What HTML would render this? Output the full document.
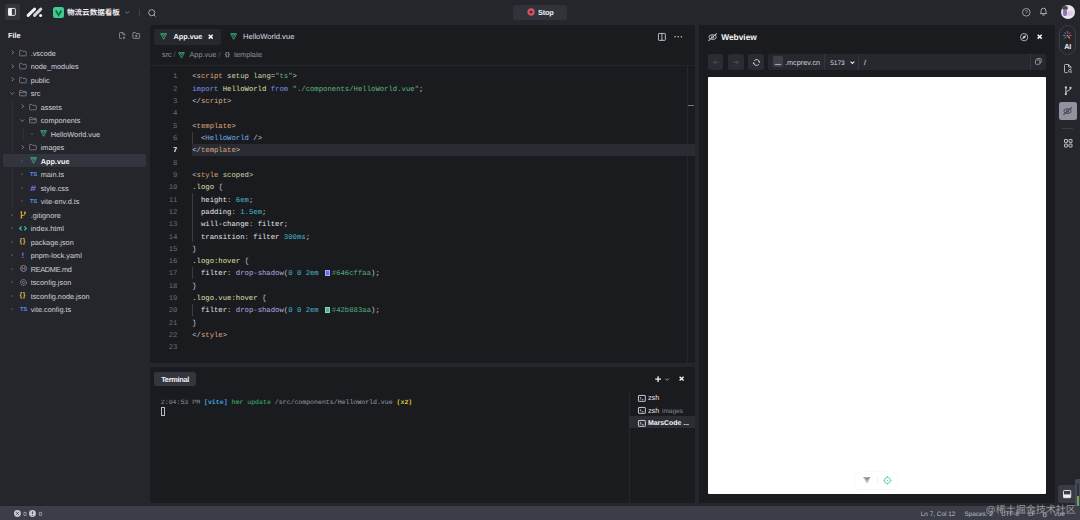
<!DOCTYPE html>
<html lang="zh"><head><meta charset="utf-8"><title>MarsCode IDE</title><style>
*{box-sizing:border-box;margin:0;padding:0}
html,body{width:1080px;height:520px;overflow:hidden;background:#25262b}
body{position:relative;text-rendering:geometricPrecision;font-family:"Liberation Sans","Noto Sans CJK SC",sans-serif;font-size:7.3px;color:#d3d5dd;line-height:1}
.abs{position:absolute}
.panel{position:absolute;background:#1a1b1f;border-radius:2px}
.t{position:absolute;white-space:nowrap;line-height:10px;height:10px}
svg{position:absolute;overflow:visible}
.row{position:absolute;left:0;width:150px;height:13.5px}
.mono{font-family:"Liberation Mono",monospace}
.code{position:absolute;left:192.2px;white-space:pre;font-family:"Liberation Mono",monospace;font-size:7.28px;line-height:12.32px;height:12.32px;color:#d6d8e0}
.ln{position:absolute;left:150px;width:27.4px;text-align:right;font-family:"Liberation Mono",monospace;font-size:7.28px;line-height:12.32px;height:12.32px;color:#6b6d77}
.tg{color:#dba67a}.at{color:#c9d7a2}.st{color:#5fb87c}.kw{color:#7590f2}.cl{color:#dfe0a8}.bl{color:#6cb2f5}
.nu{color:#45b9c9}.fn{color:#b3aae2}.pn{color:#c9ccd6}.pr{color:#e4e5ea}.hx{color:#52b07e}
.sw{display:inline-block;position:relative;top:-0.5px;width:5.8px;height:5.8px;border:0.7px solid rgba(228,228,236,0.5);vertical-align:middle;margin:0 1.45px}
</style></head><body>
<div class="abs" style="left:4.7px;top:4.4px;width:15.4px;height:15.3px;border-radius:2.5px;background:#34363e"></div>
<svg style="left:8.3px;top:8.4px" width="7.8" height="7.8" viewBox="0 0 7.8 7.8"><rect x="0.45" y="0.45" width="6.9" height="6.9" rx="0.8" fill="none" stroke="#f2f2f5" stroke-width="0.9"/><rect x="0.3" y="0.3" width="3.6" height="7.2" rx="0.6" fill="#f2f2f5"/></svg>
<svg style="left:26px;top:7px" width="18" height="11" viewBox="26 7 18 11"><path d="M28.1 15.4 L34.6 9.1" stroke="#f1f1f3" stroke-width="2.9" stroke-linecap="round"/><path d="M34.5 15.4 L40.8 9.1" stroke="#d4d4d8" stroke-width="2.9" stroke-linecap="round"/><circle cx="40.6" cy="15.4" r="1.5" fill="#f4f4f6"/></svg>
<div class="abs" style="left:53px;top:6.8px;width:11.1px;height:11.3px;border-radius:2.2px;background:#3fcb90"></div>
<svg style="left:53px;top:6.8px" width="11.1" height="11.3" viewBox="0 0 11.1 11.3"><path d="M2.9 3.5 L5.6 8.2 L8.3 3.5" fill="none" stroke="#0c6e41" stroke-width="1.7" stroke-linejoin="miter"/></svg>
<div class="t" style="left:67px;top:8.2px;font-size:7.55px;font-weight:bold;color:#f0f0f3">物流云数据看板</div>
<svg style="left:124.7px;top:11.3px" width="4.6" height="3" viewBox="0 0 4.6 3"><path d="M0.4 0.5 L2.3 2.4 L4.2 0.5" fill="none" stroke="#8d8f9a" stroke-width="0.8"/></svg>
<div class="abs" style="left:138.6px;top:8.6px;width:0.6px;height:7.4px;background:#3e4049"></div>
<svg style="left:147.6px;top:8.6px" width="8" height="8" viewBox="0 0 8 8"><circle cx="3.7" cy="3.7" r="3.05" fill="none" stroke="#b9bbc6" stroke-width="0.85"/><path d="M6 6 L7.3 7.3" stroke="#b9bbc6" stroke-width="0.85" stroke-linecap="round"/></svg>
<div class="abs" style="left:513.3px;top:4.6px;width:53.7px;height:15.4px;border-radius:2.5px;background:#31333b"></div>
<svg style="left:527px;top:8.3px" width="8" height="8" viewBox="0 0 8 8"><circle cx="4" cy="4" r="2.6" fill="none" stroke="#e4515c" stroke-width="2.1"/></svg>
<div class="t" style="left:538px;top:7.6px;font-weight:bold;font-size:7.3px;letter-spacing:-0.2px;color:#f4f4f6">Stop</div>
<svg style="left:1021.8px;top:8px" width="8.6" height="8.6" viewBox="0 0 8.6 8.6"><circle cx="4.3" cy="4.3" r="3.8" fill="none" stroke="#b4b6c1" stroke-width="0.8"/><text x="4.3" y="6.2" font-size="5.4" text-anchor="middle" fill="#b4b6c1" font-family="Liberation Sans, sans-serif">?</text></svg>
<svg style="left:1039.4px;top:7.4px" width="9" height="9" viewBox="0 0 9 9"><path d="M1.2 6.6 H7.8 C6.9 5.8 6.9 5 6.9 3.6 A2.4 2.4 0 0 0 2.1 3.6 C2.1 5 2.1 5.8 1.2 6.6 Z" fill="none" stroke="#b4b6c1" stroke-width="0.95" stroke-linejoin="round"/><path d="M3.7 8 H5.3" stroke="#b4b6c1" stroke-width="0.95" stroke-linecap="round"/></svg>
<div class="abs" style="left:1060.6px;top:5.1px;width:14.2px;height:14.2px;border-radius:50%;background:#ebe3f2;overflow:hidden"><div class="abs" style="left:1.6px;top:0.6px;width:5.6px;height:4.2px;border-radius:50%;background:#4d4a2c"></div><div class="abs" style="left:2.4px;top:4.4px;width:3.6px;height:6.4px;border-radius:40%;background:#7563a8;opacity:.85"></div><div class="abs" style="left:6.6px;top:6.4px;width:6px;height:4.6px;border-radius:45%;background:#e3b9e0;opacity:.7"></div></div>
<div class="t" style="left:8px;top:31.3px;font-weight:bold;color:#f0f0f3;font-size:7.4px">File</div>
<svg style="left:119.1px;top:31.7px" width="7.1" height="7.5" viewBox="0 0 8 8.5"><path d="M3.2 7.3 H1.4 A0.8 0.8 0 0 1 0.6 6.5 V1.4 A0.8 0.8 0 0 1 1.4 0.6 H4.4 L6.4 2.6 V4.2 M4.3 0.7 V2.7 H6.3" fill="none" stroke="#9597a3" stroke-width="0.95" stroke-linejoin="round"/><path d="M5.6 5.2 V8 M4.2 6.6 H7" stroke="#9597a3" stroke-width="0.95"/></svg>
<svg style="left:131.8px;top:32.1px" width="8.5" height="6.9" viewBox="0 0 8.6 7.6"><path d="M0.6 1.3 A0.7 0.7 0 0 1 1.3 0.6 H3.3 L4.2 1.7 H7.3 A0.7 0.7 0 0 1 8 2.4 V6.3 A0.7 0.7 0 0 1 7.3 7 H1.3 A0.7 0.7 0 0 1 0.6 6.3 Z" fill="none" stroke="#9597a3" stroke-width="0.95" stroke-linejoin="round"/><path d="M4.3 3 V5.8 M2.9 4.4 H5.7" stroke="#9597a3" stroke-width="0.95"/></svg>
<div class="abs" style="left:12.3px;top:100.5px;width:0.6px;height:107px;background:#2e3037"></div>
<div class="abs" style="left:22.5px;top:127.5px;width:0.6px;height:12.5px;background:#2e3037"></div>
<svg style="left:10.8px;top:50.2px" width="3" height="4.6" viewBox="0 0 3 4.6"><path d="M0.9 0.5 L2.6 2.3 L0.9 4.1" fill="none" stroke="#8d8f9a" stroke-width="0.9"/></svg>
<svg style="left:19px;top:49.7px" width="7.9" height="6.3" viewBox="0 0 8.4 7"><path d="M0.5 1.2 A0.7 0.7 0 0 1 1.2 0.5 H3 L3.9 1.5 H7.2 A0.7 0.7 0 0 1 7.9 2.2 V5.8 A0.7 0.7 0 0 1 7.2 6.5 H1.2 A0.7 0.7 0 0 1 0.5 5.8 Z" fill="none" stroke="#858792" stroke-width="0.85" stroke-linejoin="round"/></svg>
<div class="t" style="left:30.7px;top:48.65px;color:#d0d2da">.vscode</div>
<svg style="left:10.8px;top:63.7px" width="3" height="4.6" viewBox="0 0 3 4.6"><path d="M0.9 0.5 L2.6 2.3 L0.9 4.1" fill="none" stroke="#8d8f9a" stroke-width="0.9"/></svg>
<svg style="left:19px;top:63.2px" width="7.9" height="6.3" viewBox="0 0 8.4 7"><path d="M0.5 1.2 A0.7 0.7 0 0 1 1.2 0.5 H3 L3.9 1.5 H7.2 A0.7 0.7 0 0 1 7.9 2.2 V5.8 A0.7 0.7 0 0 1 7.2 6.5 H1.2 A0.7 0.7 0 0 1 0.5 5.8 Z" fill="none" stroke="#858792" stroke-width="0.85" stroke-linejoin="round"/></svg>
<div class="t" style="left:30.7px;top:62.15px;color:#d0d2da">node_modules</div>
<svg style="left:10.8px;top:77.2px" width="3" height="4.6" viewBox="0 0 3 4.6"><path d="M0.9 0.5 L2.6 2.3 L0.9 4.1" fill="none" stroke="#8d8f9a" stroke-width="0.9"/></svg>
<svg style="left:19px;top:76.7px" width="7.9" height="6.3" viewBox="0 0 8.4 7"><path d="M0.5 1.2 A0.7 0.7 0 0 1 1.2 0.5 H3 L3.9 1.5 H7.2 A0.7 0.7 0 0 1 7.9 2.2 V5.8 A0.7 0.7 0 0 1 7.2 6.5 H1.2 A0.7 0.7 0 0 1 0.5 5.8 Z" fill="none" stroke="#858792" stroke-width="0.85" stroke-linejoin="round"/></svg>
<div class="t" style="left:30.7px;top:75.65px;color:#d0d2da">public</div>
<svg style="left:10.2px;top:91.8px" width="4.6" height="3" viewBox="0 0 4.6 3"><path d="M0.4 0.5 L2.3 2.4 L4.2 0.5" fill="none" stroke="#8d8f9a" stroke-width="0.8"/></svg>
<svg style="left:19px;top:90.2px" width="7.9" height="6.3" viewBox="0 0 8.4 7"><path d="M0.5 1.2 A0.7 0.7 0 0 1 1.2 0.5 H3 L3.9 1.5 H7.2 A0.7 0.7 0 0 1 7.9 2.2 V5.8 A0.7 0.7 0 0 1 7.2 6.5 H1.2 A0.7 0.7 0 0 1 0.5 5.8 Z M0.6 3 H7.8" fill="none" stroke="#8f919c" stroke-width="0.8" stroke-linejoin="round"/></svg>
<div class="t" style="left:30.7px;top:89.15px;color:#d0d2da">src</div>
<svg style="left:20.8px;top:104.2px" width="3" height="4.6" viewBox="0 0 3 4.6"><path d="M0.9 0.5 L2.6 2.3 L0.9 4.1" fill="none" stroke="#8d8f9a" stroke-width="0.9"/></svg>
<svg style="left:29px;top:103.7px" width="7.9" height="6.3" viewBox="0 0 8.4 7"><path d="M0.5 1.2 A0.7 0.7 0 0 1 1.2 0.5 H3 L3.9 1.5 H7.2 A0.7 0.7 0 0 1 7.9 2.2 V5.8 A0.7 0.7 0 0 1 7.2 6.5 H1.2 A0.7 0.7 0 0 1 0.5 5.8 Z" fill="none" stroke="#858792" stroke-width="0.85" stroke-linejoin="round"/></svg>
<div class="t" style="left:40.7px;top:102.65px;color:#d0d2da">assets</div>
<svg style="left:20.2px;top:118.8px" width="4.6" height="3" viewBox="0 0 4.6 3"><path d="M0.4 0.5 L2.3 2.4 L4.2 0.5" fill="none" stroke="#8d8f9a" stroke-width="0.8"/></svg>
<svg style="left:29px;top:117.2px" width="7.9" height="6.3" viewBox="0 0 8.4 7"><path d="M0.5 1.2 A0.7 0.7 0 0 1 1.2 0.5 H3 L3.9 1.5 H7.2 A0.7 0.7 0 0 1 7.9 2.2 V5.8 A0.7 0.7 0 0 1 7.2 6.5 H1.2 A0.7 0.7 0 0 1 0.5 5.8 Z M0.6 3 H7.8" fill="none" stroke="#8f919c" stroke-width="0.8" stroke-linejoin="round"/></svg>
<div class="t" style="left:40.7px;top:116.15px;color:#d0d2da">components</div>
<div class="abs" style="left:31.2px;top:132.90px;width:1.8px;height:1.8px;border-radius:0.4px;background:#45474f"></div>
<svg style="left:39.6px;top:130.3px" width="7.3" height="6.86" viewBox="0 0 10 9.4"><path d="M0.9 0.9 H9.1 L5 8.6 Z" fill="none" stroke="#3fbd8c" stroke-width="1.05" stroke-linejoin="round"/><path d="M3.1 1 L5 4.4 L6.9 1" fill="none" stroke="#3fbd8c" stroke-width="1.05" stroke-linejoin="round" stroke-linecap="round"/></svg>
<div class="t" style="left:50.7px;top:129.65px;color:#d0d2da">HelloWorld.vue</div>
<svg style="left:20.8px;top:144.7px" width="3" height="4.6" viewBox="0 0 3 4.6"><path d="M0.9 0.5 L2.6 2.3 L0.9 4.1" fill="none" stroke="#8d8f9a" stroke-width="0.9"/></svg>
<svg style="left:29px;top:144.2px" width="7.9" height="6.3" viewBox="0 0 8.4 7"><path d="M0.5 1.2 A0.7 0.7 0 0 1 1.2 0.5 H3 L3.9 1.5 H7.2 A0.7 0.7 0 0 1 7.9 2.2 V5.8 A0.7 0.7 0 0 1 7.2 6.5 H1.2 A0.7 0.7 0 0 1 0.5 5.8 Z" fill="none" stroke="#858792" stroke-width="0.85" stroke-linejoin="round"/></svg>
<div class="t" style="left:40.7px;top:143.15px;color:#d0d2da">images</div>
<div class="abs" style="left:3.4px;top:154.45px;width:143px;height:12.8px;border-radius:2px;background:#33353e"></div>
<div class="abs" style="left:21.2px;top:159.90px;width:1.8px;height:1.8px;border-radius:0.4px;background:#45474f"></div>
<svg style="left:29.6px;top:157.3px" width="7.3" height="6.86" viewBox="0 0 10 9.4"><path d="M0.9 0.9 H9.1 L5 8.6 Z" fill="none" stroke="#3fbd8c" stroke-width="1.05" stroke-linejoin="round"/><path d="M3.1 1 L5 4.4 L6.9 1" fill="none" stroke="#3fbd8c" stroke-width="1.05" stroke-linejoin="round" stroke-linecap="round"/></svg>
<div class="t" style="left:40.7px;top:156.65px;font-weight:bold;color:#f4f4f6">App.vue</div>
<div class="abs" style="left:21.2px;top:173.40px;width:1.8px;height:1.8px;border-radius:0.4px;background:#45474f"></div>
<div class="t" style="left:30.0px;top:170.35000000000002px;font-size:5.7px;font-weight:bold;color:#5b8ff0;letter-spacing:0px">TS</div>
<div class="t" style="left:40.7px;top:170.15px;color:#d0d2da">main.ts</div>
<div class="abs" style="left:21.2px;top:186.90px;width:1.8px;height:1.8px;border-radius:0.4px;background:#45474f"></div>
<div class="t" style="left:30.5px;top:184.10px;font-size:8px;font-weight:bold;color:#8a6df2;transform:scaleX(1.3);transform-origin:50% 50%">#</div>
<div class="t" style="left:40.7px;top:183.65px;color:#d0d2da">style.css</div>
<div class="abs" style="left:21.2px;top:200.40px;width:1.8px;height:1.8px;border-radius:0.4px;background:#45474f"></div>
<div class="t" style="left:30.0px;top:197.35000000000002px;font-size:5.7px;font-weight:bold;color:#5b8ff0;letter-spacing:0px">TS</div>
<div class="t" style="left:40.7px;top:197.15px;color:#d0d2da">vite-env.d.ts</div>
<div class="abs" style="left:11.2px;top:213.90px;width:1.8px;height:1.8px;border-radius:0.4px;background:#45474f"></div>
<svg style="left:20px;top:211.00px" width="6.5" height="7.6" viewBox="0 0 6.5 7.6"><path d="M1.4 1 V6.8 M1.4 4.6 C4.6 4.6 5 3.6 5 1.6" fill="none" stroke="#e9a93b" stroke-width="1.1"/><circle cx="1.4" cy="1.1" r="0.9" fill="#e9a93b"/><circle cx="5" cy="1.4" r="0.9" fill="#e9a93b"/><circle cx="1.4" cy="6.6" r="0.9" fill="#e9a93b"/></svg>
<div class="t" style="left:30.7px;top:210.65px;color:#d0d2da">.gitignore</div>
<div class="abs" style="left:11.2px;top:227.40px;width:1.8px;height:1.8px;border-radius:0.4px;background:#45474f"></div>
<svg style="left:19px;top:225.90px" width="8" height="4.8" viewBox="0 0 8 4.8"><path d="M2.6 0.5 L0.7 2.4 L2.6 4.3 M5.4 0.5 L7.3 2.4 L5.4 4.3" fill="none" stroke="#3fb99f" stroke-width="1.25"/></svg>
<div class="t" style="left:30.7px;top:224.15px;color:#d0d2da">index.html</div>
<div class="abs" style="left:11.2px;top:240.90px;width:1.8px;height:1.8px;border-radius:0.4px;background:#45474f"></div>
<div class="t" style="left:19.6px;top:236.9px;font-size:6.8px;font-weight:bold;color:#d9bb4c;letter-spacing:0.6px">{}</div>
<div class="t" style="left:30.7px;top:237.65px;color:#d0d2da">package.json</div>
<div class="abs" style="left:11.2px;top:254.40px;width:1.8px;height:1.8px;border-radius:0.4px;background:#45474f"></div>
<div class="t" style="left:21.6px;top:250.5px;font-size:8px;font-weight:bold;color:#8a6df2;letter-spacing:0px">!</div>
<div class="t" style="left:30.7px;top:251.15px;color:#d0d2da">pnpm-lock.yaml</div>
<div class="abs" style="left:11.2px;top:267.90px;width:1.8px;height:1.8px;border-radius:0.4px;background:#45474f"></div>
<svg style="left:19.5px;top:265.40px" width="7" height="7" viewBox="0 0 7 7"><circle cx="3.5" cy="3.5" r="3" fill="none" stroke="#9496a1" stroke-width="0.8"/><path d="M2.2 4.9 V2.4 L3.5 3.8 L4.8 2.4 V4.9" fill="none" stroke="#9496a1" stroke-width="0.7"/></svg>
<div class="t" style="left:30.7px;top:264.65px;color:#d0d2da;letter-spacing:-0.28px">README.md</div>
<div class="abs" style="left:11.2px;top:281.40px;width:1.8px;height:1.8px;border-radius:0.4px;background:#45474f"></div>
<svg style="left:19.5px;top:278.90px" width="7" height="7" viewBox="0 0 7 7"><circle cx="3.5" cy="3.5" r="2.9" fill="none" stroke="#9496a1" stroke-width="1" stroke-dasharray="1.4 0.5"/><circle cx="3.5" cy="3.5" r="1.1" fill="none" stroke="#9496a1" stroke-width="0.7"/></svg>
<div class="t" style="left:30.7px;top:278.15px;color:#d0d2da">tsconfig.json</div>
<div class="abs" style="left:11.2px;top:294.90px;width:1.8px;height:1.8px;border-radius:0.4px;background:#45474f"></div>
<div class="t" style="left:19.6px;top:290.90000000000003px;font-size:6.8px;font-weight:bold;color:#d9bb4c;letter-spacing:0.6px">{}</div>
<div class="t" style="left:30.7px;top:291.65px;color:#d0d2da">tsconfig.node.json</div>
<div class="abs" style="left:11.2px;top:308.40px;width:1.8px;height:1.8px;border-radius:0.4px;background:#45474f"></div>
<div class="t" style="left:20.0px;top:305.35px;font-size:5.7px;font-weight:bold;color:#5b8ff0;letter-spacing:0px">TS</div>
<div class="t" style="left:30.7px;top:305.15px;color:#d0d2da">vite.config.ts</div>
<div class="panel" style="left:150.1px;top:25px;width:545.2px;height:338px"></div>
<div class="abs" style="left:154.3px;top:29.1px;width:67.2px;height:15.6px;border-radius:2.5px;background:#27282e"></div>
<svg style="left:159.8px;top:32.9px" width="7.3" height="6.86" viewBox="0 0 10 9.4"><path d="M0.9 0.9 H9.1 L5 8.6 Z" fill="none" stroke="#3fbd8c" stroke-width="1.05" stroke-linejoin="round"/><path d="M3.1 1 L5 4.4 L6.9 1" fill="none" stroke="#3fbd8c" stroke-width="1.05" stroke-linejoin="round" stroke-linecap="round"/></svg>
<div class="t" style="left:173.5px;top:31.9px;font-weight:bold;color:#f4f4f6">App.vue</div>
<svg style="left:207.9px;top:33.8px" width="5.4" height="5.4" viewBox="0 0 5.4 5.4"><path d="M0.7 0.8 L4.7 4.6 M4.7 0.8 L0.7 4.6" stroke="#f4f4f6" stroke-width="1.5"/></svg>
<svg style="left:229.7px;top:32.9px" width="7.3" height="6.86" viewBox="0 0 10 9.4"><path d="M0.9 0.9 H9.1 L5 8.6 Z" fill="none" stroke="#3fbd8c" stroke-width="1.05" stroke-linejoin="round"/><path d="M3.1 1 L5 4.4 L6.9 1" fill="none" stroke="#3fbd8c" stroke-width="1.05" stroke-linejoin="round" stroke-linecap="round"/></svg>
<div class="t" style="left:243px;top:31.9px;color:#d9dbe2;font-size:7.6px">HelloWorld.vue</div>
<svg style="left:658.2px;top:32.6px" width="7.8" height="7.8" viewBox="0 0 7.8 7.8"><rect x="0.45" y="0.45" width="6.9" height="6.9" rx="0.6" fill="none" stroke="#c9cbd4" stroke-width="0.9"/><path d="M3.9 0.5 V7.3" stroke="#c9cbd4" stroke-width="0.9"/></svg>
<svg style="left:673.8px;top:35.7px" width="8.4" height="1.6" viewBox="0 0 8.4 1.6"><circle cx="1" cy="0.8" r="0.75" fill="#c9cbd4"/><circle cx="4.2" cy="0.8" r="0.75" fill="#c9cbd4"/><circle cx="7.4" cy="0.8" r="0.75" fill="#c9cbd4"/></svg>
<div class="t" style="left:162px;top:50.4px;color:#8f919c">src</div>
<div class="t" style="left:173.4px;top:50.4px;color:#5d5f69">/</div>
<svg style="left:178.2px;top:51.5px" width="7.0" height="6.58" viewBox="0 0 10 9.4"><path d="M0.9 0.9 H9.1 L5 8.6 Z" fill="none" stroke="#3fbd8c" stroke-width="1.05" stroke-linejoin="round"/><path d="M3.1 1 L5 4.4 L6.9 1" fill="none" stroke="#3fbd8c" stroke-width="1.05" stroke-linejoin="round" stroke-linecap="round"/></svg>
<div class="t" style="left:189.5px;top:50.4px;color:#8f919c">App.vue</div>
<div class="t" style="left:218.4px;top:50.4px;color:#5d5f69">/</div>
<div class="t" style="left:225px;top:50.4px;color:#a9abb6;font-size:5.6px;font-weight:bold;letter-spacing:0.2px">{}</div>
<div class="t" style="left:234px;top:50.4px;color:#8f919c">template</div>
<div class="abs" style="left:150px;top:65px;width:545px;height:0.7px;background:#25262b"></div>
<div class="abs" style="left:687.2px;top:65px;width:0.6px;height:298px;background:#25262b"></div>
<div class="abs" style="left:687.8px;top:105px;width:6.6px;height:0.7px;background:#70727c"></div>
<div class="abs" style="left:191.8px;top:143.72px;width:503px;height:12.3px;background:#2a2c34"></div>
<div class="abs" style="left:192.3px;top:131.50px;width:0.6px;height:12.32px;background:#3a3c45"></div>
<div class="abs" style="left:192.3px;top:193.10px;width:0.6px;height:49.28px;background:#3a3c45"></div>
<div class="abs" style="left:192.3px;top:267.02px;width:0.6px;height:12.32px;background:#3a3c45"></div>
<div class="abs" style="left:192.3px;top:303.98px;width:0.6px;height:12.32px;background:#3a3c45"></div>
<div class="ln" style="top:71.35px">1</div>
<div class="code" style="top:71.35px"><span class="pn">&lt;</span><span class="tg">script</span> <span class="at">setup</span> <span class="at">lang</span><span class="pn">=</span><span class="st">"ts"</span><span class="pn">&gt;</span></div>
<div class="ln" style="top:83.67px">2</div>
<div class="code" style="top:83.67px"><span class="kw">import</span> <span class="cl">HelloWorld</span> <span class="kw">from</span> <span class="st">"./components/HelloWorld.vue"</span><span class="pn">;</span></div>
<div class="ln" style="top:95.99px">3</div>
<div class="code" style="top:95.99px"><span class="pn">&lt;/</span><span class="tg">script</span><span class="pn">&gt;</span></div>
<div class="ln" style="top:108.31px">4</div>
<div class="ln" style="top:120.63px">5</div>
<div class="code" style="top:120.63px"><span class="pn">&lt;</span><span class="tg">template</span><span class="pn">&gt;</span></div>
<div class="ln" style="top:132.95px">6</div>
<div class="code" style="top:132.95px">  <span class="pn">&lt;</span><span class="bl">HelloWorld</span> <span class="pn">/&gt;</span></div>
<div class="ln" style="top:145.27px;color:#f0f0f3;font-weight:bold">7</div>
<div class="code" style="top:145.27px"><span class="pn">&lt;/</span><span class="tg">template</span><span class="pn">&gt;</span></div>
<div class="ln" style="top:157.59px">8</div>
<div class="ln" style="top:169.91px">9</div>
<div class="code" style="top:169.91px"><span class="pn">&lt;</span><span class="tg">style</span> <span class="at">scoped</span><span class="pn">&gt;</span></div>
<div class="ln" style="top:182.23px">10</div>
<div class="code" style="top:182.23px"><span class="cl">.logo</span> <span class="pn">{</span></div>
<div class="ln" style="top:194.55px">11</div>
<div class="code" style="top:194.55px">  <span class="pr">height</span><span class="pn">:</span> <span class="nu">6em</span><span class="pn">;</span></div>
<div class="ln" style="top:206.87px">12</div>
<div class="code" style="top:206.87px">  <span class="pr">padding</span><span class="pn">:</span> <span class="nu">1.5em</span><span class="pn">;</span></div>
<div class="ln" style="top:219.19px">13</div>
<div class="code" style="top:219.19px">  <span class="pr">will-change</span><span class="pn">:</span> <span class="pr">filter</span><span class="pn">;</span></div>
<div class="ln" style="top:231.51px">14</div>
<div class="code" style="top:231.51px">  <span class="pr">transition</span><span class="pn">:</span> <span class="pr">filter</span> <span class="nu">300ms</span><span class="pn">;</span></div>
<div class="ln" style="top:243.83px">15</div>
<div class="code" style="top:243.83px"><span class="pn">}</span></div>
<div class="ln" style="top:256.15px">16</div>
<div class="code" style="top:256.15px"><span class="cl">.logo:hover</span> <span class="pn">{</span></div>
<div class="ln" style="top:268.47px">17</div>
<div class="code" style="top:268.47px">  <span class="pr">filter</span><span class="pn">:</span> <span class="fn">drop-shadow</span><span class="pn">(</span><span class="nu">0 0 2em</span> <span class="sw" style="background:#646cff"></span><span class="hx">#646cffaa</span><span class="pn">);</span></div>
<div class="ln" style="top:280.79px">18</div>
<div class="code" style="top:280.79px"><span class="pn">}</span></div>
<div class="ln" style="top:293.11px">19</div>
<div class="code" style="top:293.11px"><span class="cl">.logo.vue:hover</span> <span class="pn">{</span></div>
<div class="ln" style="top:305.43px">20</div>
<div class="code" style="top:305.43px">  <span class="pr">filter</span><span class="pn">:</span> <span class="fn">drop-shadow</span><span class="pn">(</span><span class="nu">0 0 2em</span> <span class="sw" style="background:#42b883"></span><span class="hx">#42b883aa</span><span class="pn">);</span></div>
<div class="ln" style="top:317.75px">21</div>
<div class="code" style="top:317.75px"><span class="pn">}</span></div>
<div class="ln" style="top:330.07px">22</div>
<div class="code" style="top:330.07px"><span class="pn">&lt;/</span><span class="tg">style</span><span class="pn">&gt;</span></div>
<div class="ln" style="top:342.39px">23</div>
<div class="panel" style="left:150.2px;top:366.8px;width:545.1px;height:135.9px"></div>
<div class="abs" style="left:154.2px;top:371.7px;width:41.6px;height:14.2px;border-radius:2.3px;background:#34363f"></div>
<div class="t" style="left:161.2px;top:375.4px;font-weight:bold;font-size:7.4px;letter-spacing:-0.3px;color:#f1f1f4">Terminal</div>
<svg style="left:655.4px;top:375.8px" width="6.2" height="6.2" viewBox="0 0 6.2 6.2"><path d="M3.1 0.2 V6 M0.2 3.1 H6" stroke="#f0f0f3" stroke-width="1.3"/></svg>
<svg style="left:664.6px;top:377.6px" width="4.4" height="3" viewBox="0 0 4.4 3"><path d="M0.4 0.5 L2.2 2.3 L4 0.5" fill="none" stroke="#b9bbc6" stroke-width="0.8"/></svg>
<svg style="left:679.4px;top:376.4px" width="5.2" height="5.2" viewBox="0 0 5.2 5.2"><path d="M0.6 0.7 L4.6 4.5 M4.6 0.7 L0.6 4.5" stroke="#f4f4f6" stroke-width="1.4"/></svg>
<div class="t mono" style="left:160.8px;top:398.1px;font-size:6.56px;color:#8b8d96">2:04:53 PM <b style="color:#3ea6e0">[vite]</b> <span style="color:#3db872">hmr update</span> <span style="color:#9c9ea7">/src/components/HelloWorld.vue</span> <b style="color:#d7c23f">(x2)</b></div>
<div class="abs" style="left:161px;top:406.8px;width:4px;height:9px;border:0.7px solid #b9bbc6"></div>
<div class="abs" style="left:628.6px;top:390.8px;width:0.6px;height:111.9px;background:#26272d"></div>
<div class="abs" style="left:629.2px;top:416.2px;width:65.8px;height:11.8px;background:#2b2d35"></div>
<svg style="left:638px;top:394.6px" width="7.8" height="6.8" viewBox="0 0 7.8 6.8"><rect x="0.45" y="0.45" width="6.9" height="5.9" rx="0.5" fill="none" stroke="#d9dbe2" stroke-width="0.9"/><path d="M1.9 2.2 L3.2 3.3 L1.9 4.4" fill="none" stroke="#d9dbe2" stroke-width="0.8"/><path d="M3.8 4.7 H5.6" stroke="#d9dbe2" stroke-width="0.8"/></svg>
<div class="t" style="left:648px;top:393.10px;color:#e3e4ea;font-size:7.2px">zsh</div>
<svg style="left:638px;top:407.2px" width="7.8" height="6.8" viewBox="0 0 7.8 6.8"><rect x="0.45" y="0.45" width="6.9" height="5.9" rx="0.5" fill="none" stroke="#d9dbe2" stroke-width="0.9"/><path d="M1.9 2.2 L3.2 3.3 L1.9 4.4" fill="none" stroke="#d9dbe2" stroke-width="0.8"/><path d="M3.8 4.7 H5.6" stroke="#d9dbe2" stroke-width="0.8"/></svg>
<div class="t" style="left:648px;top:405.70px;color:#e3e4ea;font-size:7.2px">zsh</div>
<div class="t" style="left:662px;top:406.60px;color:#868893;font-size:6.5px">images</div>
<svg style="left:638px;top:419.8px" width="7.8" height="6.8" viewBox="0 0 7.8 6.8"><rect x="0.45" y="0.45" width="6.9" height="5.9" rx="0.5" fill="none" stroke="#d9dbe2" stroke-width="0.9"/><path d="M1.9 2.2 L3.2 3.3 L1.9 4.4" fill="none" stroke="#d9dbe2" stroke-width="0.8"/><path d="M3.8 4.7 H5.6" stroke="#d9dbe2" stroke-width="0.8"/></svg>
<div class="t" style="left:648px;top:419.00px;font-weight:bold;color:#f4f4f6;font-size:6.9px">MarsCode ...</div>
<div class="panel" style="left:698.7px;top:25px;width:356px;height:477.7px"></div>
<svg style="left:707.6px;top:33.2px" width="9.4" height="8" viewBox="0 0 9.4 8"><ellipse cx="4.6" cy="4.1" rx="3.7" ry="2.4" fill="none" stroke="#d9dbe2" stroke-width="0.8"/><circle cx="4.6" cy="4.1" r="1.15" fill="none" stroke="#d9dbe2" stroke-width="0.75"/><path d="M1 7.2 L8.2 1" fill="none" stroke="#d9dbe2" stroke-width="0.75"/><circle cx="0.9" cy="7.3" r="0.65" fill="#d9dbe2"/><circle cx="8.3" cy="0.9" r="0.65" fill="#d9dbe2"/></svg>
<div class="t" style="left:721.2px;top:32px;font-weight:bold;font-size:8.4px;color:#f6f6f8">Webview</div>
<svg style="left:1019.8px;top:32.8px" width="8.3" height="8.3" viewBox="0 0 8.8 8.8"><circle cx="4.4" cy="4.4" r="3.9" fill="none" stroke="#c9cbd4" stroke-width="0.85"/><path d="M6.6 2.2 L5.4 5.4 L2.2 6.6 L3.4 3.4 Z" fill="#c9cbd4"/></svg>
<svg style="left:1036.8px;top:34.4px" width="5.4" height="5.4" viewBox="0 0 5.4 5.4"><path d="M0.7 0.8 L4.7 4.6 M4.7 0.8 L0.7 4.6" stroke="#f4f4f6" stroke-width="1.5"/></svg>
<div class="abs" style="left:707.8px;top:54.2px;width:15.5px;height:15.4px;border-radius:2.3px;background:#2a2c33"></div>
<div class="abs" style="left:728px;top:54.2px;width:15.5px;height:15.4px;border-radius:2.3px;background:#2a2c33"></div>
<div class="abs" style="left:748.1px;top:54.2px;width:15.5px;height:15.4px;border-radius:2.3px;background:#2a2c33"></div>
<svg style="left:712.5px;top:59.6px" width="6" height="4.6" viewBox="0 0 6 4.6"><path d="M5.6 2.3 H0.8 M2.6 0.5 L0.8 2.3 L2.6 4.1" fill="none" stroke="#54565f" stroke-width="0.8"/></svg>
<svg style="left:732.8px;top:59.6px" width="6" height="4.6" viewBox="0 0 6 4.6"><path d="M0.4 2.3 H5.2 M3.4 0.5 L5.2 2.3 L3.4 4.1" fill="none" stroke="#54565f" stroke-width="0.8"/></svg>
<svg style="left:752.6px;top:58.8px" width="7" height="7" viewBox="0 0 7 7"><path d="M1.12 1.84 A2.9 2.9 0 0 1 6.39 3.0 M5.88 5.16 A2.9 2.9 0 0 1 0.61 4.0" fill="none" stroke="#d9dbe2" stroke-width="0.85"/><path d="M5.2 2.4 H7.4 L6.4 3.9 Z M1.8 4.6 H-0.4 L0.6 3.1 Z" fill="#d9dbe2"/></svg>
<div class="abs" style="left:768.3px;top:54.2px;width:278px;height:15.6px;border-radius:2.5px;background:#26282e"></div>
<div class="abs" style="left:773.3px;top:56.2px;width:9.7px;height:11px;border-radius:1.8px;background:#3c3e48"></div>
<div class="t" style="left:775.1px;top:59px;color:#f0f0f4;font-size:7px;font-weight:bold;letter-spacing:0px">...</div>
<div class="t" style="left:785px;top:57.8px;color:#cfd1d9">.mcprev.cn</div>
<div class="abs" style="left:823.8px;top:54.2px;width:0.6px;height:15.6px;background:#34363e"></div>
<div class="t" style="left:830.2px;top:59.2px;color:#d6d8e0;font-size:6.5px">5173</div>
<svg style="left:849.8px;top:60.8px" width="4.8" height="3.3" viewBox="0 0 4.8 3.3"><path d="M0.5 0.6 L2.4 2.5 L4.3 0.6" fill="none" stroke="#e3e4ea" stroke-width="1.1"/></svg>
<div class="abs" style="left:858.2px;top:54.2px;width:0.6px;height:15.6px;background:#34363e"></div>
<div class="t" style="left:864px;top:57.8px;color:#e3e4ea">/</div>
<div class="abs" style="left:1030.2px;top:54.2px;width:0.6px;height:15.6px;background:#34363e"></div>
<svg style="left:1034.8px;top:58.4px" width="6.6" height="6.8" viewBox="0 0 6.6 6.8"><rect x="0.45" y="1.9" width="4.4" height="4.4" rx="0.8" fill="none" stroke="#9597a3" stroke-width="0.95"/><path d="M1.9 1.8 V1.2 A0.8 0.8 0 0 1 2.7 0.45 H5.4 A0.8 0.8 0 0 1 6.15 1.2 V4 A0.8 0.8 0 0 1 5.4 4.8 H4.9" fill="none" stroke="#9597a3" stroke-width="0.95"/></svg>
<div class="abs" style="left:707.9px;top:76.85px;width:338.1px;height:417px;background:#fff;border-radius:1px"></div>
<div class="abs" style="left:855.4px;top:471.6px;width:42.4px;height:17px;border-radius:7px;background:#fff;box-shadow:0 0 2px rgba(0,0,0,0.07)"></div>
<svg style="left:863px;top:476.8px" width="8" height="6.6" viewBox="0 0 8 6.6"><path d="M0 0 L4 6.6 L8 0 H6.2 L4 3.6 L1.8 0 Z" fill="#b9b9b9"/><path d="M1.8 0 L4 3.6 L6.2 0 H4.9 L4 1.5 L3.1 0 Z" fill="#6b6b6b"/></svg>
<div class="abs" style="left:876.8px;top:477.6px;width:0.6px;height:5.4px;background:#efeff2"></div>
<svg style="left:882.8px;top:475.6px" width="8.8" height="8.8" viewBox="0 0 8.8 8.8"><circle cx="4.4" cy="4.4" r="3" fill="none" stroke="#4fd79e" stroke-width="0.95"/><circle cx="4.4" cy="4.4" r="0.7" fill="#4fd79e"/><path d="M4.4 0.2 V1.6 M4.4 7.2 V8.6 M0.2 4.4 H1.6 M7.2 4.4 H8.6" stroke="#4fd79e" stroke-width="0.95"/></svg>
<div class="abs" style="left:1058.9px;top:25.1px;width:17.6px;height:30.4px;border-radius:8.8px;border:0.7px solid #3c3e47"></div>
<svg style="left:1062.9px;top:31.4px" width="8.8" height="8.8" viewBox="0 0 8.8 8.8"><path d="M4.1 4.3 L6.6 7.2" stroke="#f2845c" stroke-width="1.1" stroke-linecap="round"/><path d="M4.4 0.6 V2.0" stroke="#a77bf3" stroke-width="0.9" stroke-linecap="round"/><path d="M1.7 1.7 L2.6 2.6" stroke="#5b8ff0" stroke-width="0.9" stroke-linecap="round"/><path d="M0.6 4.4 H2.0" stroke="#4aa8f0" stroke-width="0.9" stroke-linecap="round"/><path d="M1.8 7 L2.7 6.1" stroke="#4fd0d0" stroke-width="0.9" stroke-linecap="round"/><path d="M7.1 1.7 L6.2 2.6" stroke="#e86aa8" stroke-width="0.9" stroke-linecap="round"/><path d="M6.8 4.4 H8.2" stroke="#f0607a" stroke-width="0.9" stroke-linecap="round"/></svg>
<div class="t" style="left:1064.3px;top:42.4px;font-weight:bold;font-size:7.2px;letter-spacing:-0.2px;color:#f1f1f4">AI</div>
<svg style="left:1063.6px;top:63.8px" width="8.6" height="9.4" viewBox="0 0 8.6 9.4"><path d="M3.6 8.6 H1.3 A0.8 0.8 0 0 1 0.5 7.8 V1.3 A0.8 0.8 0 0 1 1.3 0.5 H4.6 L7 2.9 V4.6 M4.5 0.6 V3 H6.9" fill="none" stroke="#c9cbd4" stroke-width="0.85" stroke-linejoin="round"/><circle cx="5.9" cy="6.8" r="1.4" fill="none" stroke="#c9cbd4" stroke-width="0.8"/><path d="M6.9 7.8 L7.9 8.8" stroke="#c9cbd4" stroke-width="0.8"/></svg>
<svg style="left:1063.8px;top:85.6px" width="8.4" height="9.6" viewBox="0 0 8.4 9.6"><circle cx="1.9" cy="1.5" r="1.15" fill="#c9cbd4"/><circle cx="1.9" cy="8.1" r="1.15" fill="#c9cbd4"/><circle cx="6.5" cy="1.9" r="1.15" fill="#c9cbd4"/><path d="M1.9 2 V7.6 M6.5 2.6 C6.5 5 1.9 4.4 1.9 6.8" fill="none" stroke="#c9cbd4" stroke-width="0.95"/></svg>
<div class="abs" style="left:1058.7px;top:102.4px;width:18.2px;height:17.4px;border-radius:2.5px;background:#9092a0"></div>
<svg style="left:1063.1px;top:107.1px" width="9.4" height="8" viewBox="0 0 9.4 8"><ellipse cx="4.6" cy="4.1" rx="3.7" ry="2.4" fill="none" stroke="#33353d" stroke-width="0.8"/><circle cx="4.6" cy="4.1" r="1.15" fill="none" stroke="#33353d" stroke-width="0.75"/><path d="M1 7.2 L8.2 1" fill="none" stroke="#33353d" stroke-width="0.75"/><circle cx="0.9" cy="7.3" r="0.65" fill="#33353d"/><circle cx="8.3" cy="0.9" r="0.65" fill="#33353d"/></svg>
<div class="abs" style="left:1062.2px;top:127.6px;width:11px;height:0.6px;background:#3c3e47"></div>
<svg style="left:1063.5px;top:139.2px" width="8.8" height="8.8" viewBox="0 0 8.8 8.8"><rect x="0.5" y="0.5" width="2.9" height="2.9" rx="0.3" fill="none" stroke="#c9cbd4" stroke-width="0.95"/><rect x="5.1" y="0.5" width="2.9" height="2.9" rx="0.3" fill="none" stroke="#c9cbd4" stroke-width="0.95"/><rect x="0.5" y="5.1" width="2.9" height="2.9" rx="0.3" fill="none" stroke="#c9cbd4" stroke-width="0.95"/><rect x="5.1" y="5.1" width="2.9" height="2.9" rx="0.3" fill="none" stroke="#c9cbd4" stroke-width="0.95"/></svg>
<div class="abs" style="left:1058.4px;top:485px;width:17.2px;height:17.6px;border-radius:2.5px;background:#3a3c45"></div>
<svg style="left:1063.4px;top:489.8px" width="8.2" height="8.2" viewBox="0 0 8.2 8.2"><rect x="0.5" y="0.5" width="7.2" height="7.2" rx="0.8" fill="none" stroke="#f0f0f3" stroke-width="0.9"/><rect x="0.5" y="4.4" width="7.2" height="3.3" fill="#f0f0f3"/></svg>
<div class="abs" style="left:1075.2px;top:479px;width:4.8px;height:31.5px;border-radius:1.5px 0 0 1.5px;background:#464852"></div>
<div class="abs" style="left:1076.5px;top:482.5px;width:2.4px;height:26px;background:linear-gradient(#2c3342 0,#2c3342 50%,#8f9c3c 51%,#5fa46a 75%,#38a88c 100%)"></div>
<div class="abs" style="left:0;top:506px;width:1080px;height:14px;background:#3b3d47"></div>
<svg style="left:14px;top:509.9px" width="6.9" height="6.9" viewBox="0 0 6.9 6.9"><circle cx="3.45" cy="3.45" r="3.45" fill="#c4c6d4"/><path d="M2.2 2.2 L4.7 4.7 M4.7 2.2 L2.2 4.7" stroke="#3a3c47" stroke-width="0.8"/></svg>
<div class="t" style="left:23.3px;top:510.2px;font-size:6px;color:#c4c6d4">0</div>
<svg style="left:29.2px;top:509.9px" width="6.9" height="6.9" viewBox="0 0 6.9 6.9"><circle cx="3.45" cy="3.45" r="3.45" fill="#c4c6d4"/><path d="M3.45 1.5 V4" stroke="#3a3c47" stroke-width="0.9"/><circle cx="3.45" cy="5.2" r="0.5" fill="#3a3c47"/></svg>
<div class="t" style="left:38.7px;top:510.2px;font-size:6px;color:#c4c6d4">0</div>
<div class="t" style="left:920.8px;top:510.2px;font-size:6.4px;color:#b9bbc8">Ln 7, Col 12</div>
<div class="t" style="left:964.5px;top:510.2px;font-size:6.4px;color:#b9bbc8">Spaces: 2</div>
<div class="t" style="left:1001px;top:510.2px;font-size:6.4px;color:#b9bbc8">UTF-8</div>
<div class="t" style="left:1028px;top:510.2px;font-size:6.4px;color:#b9bbc8">LF</div>
<div class="t" style="left:1042.6px;top:510.2px;font-size:5.6px;font-weight:bold;color:#b9bbc8">{}</div>
<div class="t" style="left:1053.6px;top:510.2px;font-size:6.4px;color:#b9bbc8">Vue</div>
<div class="t" style="left:985.6px;top:505.4px;font-size:10px;line-height:12px;height:12px;color:rgba(255,255,255,0.56);text-shadow:0 0 1px rgba(0,0,0,0.45)">@稀土掘金技术社区</div>
</body></html>
